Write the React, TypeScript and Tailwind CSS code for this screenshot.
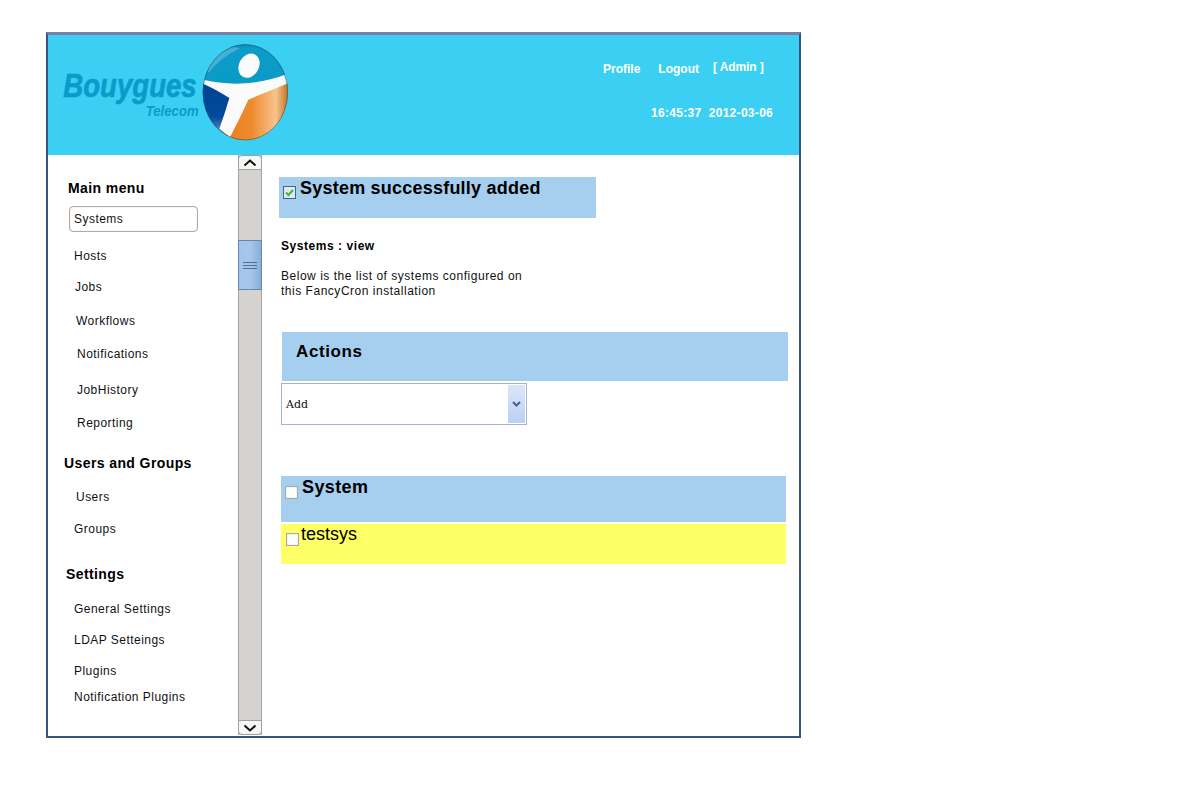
import React from "react";

const menu: { label: string; cls: string }[] = [
  { label: "Hosts", cls: "mt-[16px] ml-[26px]" },
  { label: "Jobs", cls: "mt-[15px] ml-[27px]" },
  { label: "Workflows", cls: "mt-[18px] ml-[28px]" },
  { label: "Notifications", cls: "mt-[17px] ml-[29px]" },
  { label: "JobHistory", cls: "mt-[20px] ml-[29px]" },
  { label: "Reporting", cls: "mt-[17px] ml-[29px]" },
];
const users: { label: string; cls: string }[] = [
  { label: "Users", cls: "mt-[18px] ml-[28px]" },
  { label: "Groups", cls: "mt-[16px] ml-[26px]" },
];
const settings: { label: string; cls: string }[] = [
  { label: "General Settings", cls: "mt-[19px] ml-[26px]" },
  { label: "LDAP Setteings", cls: "mt-[15px] ml-[26px]" },
  { label: "Plugins", cls: "mt-[15px] ml-[26px]" },
  { label: "Notification Plugins", cls: "mt-[10px] ml-[26px]" },
];

function Item({ label, cls }: { label: string; cls: string }) {
  return <div className={`h-4 leading-4 text-[12px] tracking-[0.47px] text-[#111] ${cls}`}>{label}</div>;
}

function Heading({ label, cls }: { label: string; cls: string }) {
  return <div className={`h-4 leading-4 text-[14px] font-bold tracking-[0.4px] text-black ${cls}`}>{label}</div>;
}

function Logo() {
  return (
    <svg width="230" height="100" viewBox="60 42 690 300" className="block">
      <defs>
        <clipPath id="ball">
          <ellipse cx="616" cy="193" rx="128" ry="144" />
        </clipPath>
        <linearGradient id="top" x1="0" y1="0" x2="0.2" y2="1">
          <stop offset="0" stopColor="#0d6f94" />
          <stop offset="0.25" stopColor="#0c9cc9" />
          <stop offset="1" stopColor="#0a9ac6" />
        </linearGradient>
        <linearGradient id="orange" x1="0" y1="0" x2="1" y2="0">
          <stop offset="0" stopColor="#ec7a1c" />
          <stop offset="0.45" stopColor="#ee8a2e" />
          <stop offset="0.8" stopColor="#f6c48c" />
          <stop offset="1" stopColor="#b9640f" />
        </linearGradient>
        <linearGradient id="blue" x1="0" y1="0" x2="0" y2="1">
          <stop offset="0" stopColor="#00428f" />
          <stop offset="0.6" stopColor="#004a9e" />
          <stop offset="1" stopColor="#8fb4dc" />
        </linearGradient>
      </defs>
      <text x="70" y="207" fontFamily="'Liberation Sans', sans-serif" fontWeight="700" fontStyle="italic" fontSize="100" fill="#0a9cc8" stroke="#0a9cc8" strokeWidth="2" textLength="400" lengthAdjust="spacingAndGlyphs">Bouygues</text>
      <text x="317" y="265" fontFamily="'Liberation Sans', sans-serif" fontWeight="700" fontStyle="italic" fontSize="46" fill="#0a9cc8" textLength="159" lengthAdjust="spacingAndGlyphs">Telecom</text>
      <g clipPath="url(#ball)">
        <rect x="480" y="40" width="270" height="140" fill="url(#top)" />
        <path d="M480 155 L580 215 V340 H480 Z" fill="url(#blue)" />
        <path d="M600 225 L750 150 V340 H540 Z" fill="url(#orange)" />
        <path d="M505 62 Q560 50 600 60 Q540 90 505 135 Q495 100 505 62 Z" fill="#ffffff" opacity="0.22" />
        <path d="M480 153 Q615 188 750 135 L750 163 L625 215 Q600 270 570 328 L538 302 Q555 255 568 210 Q530 185 480 163 Z" fill="#fbfbfb" />
        <ellipse cx="627" cy="113" rx="30" ry="38" transform="rotate(28 627 113)" fill="#fbfbfb" />
      </g>
      <ellipse cx="616" cy="193" rx="127" ry="143" fill="none" stroke="#23505c" strokeWidth="3" opacity="0.55" />
    </svg>
  );
}

function CheckBox({ checked, cls }: { checked?: boolean; cls: string }) {
  return (
    <div className={`w-[13px] h-[13px] shrink-0 ${checked ? "border border-[#44648c] bg-[#dfe9ee]" : "border border-[#a8a8a8] bg-[#fdfdfd] shadow-[inset_0_0_1px_#999]"} ${cls}`}>
      {checked && (
        <svg width="11" height="11" viewBox="0 0 11 11" className="block">
          <path d="M2 5.5 L4.5 8 L9 3" fill="none" stroke="#3fb53a" strokeWidth="2" />
        </svg>
      )}
    </div>
  );
}

export default function App() {
  return (
    <div className="w-[1200px] h-[800px] bg-white pt-[32px] pl-[46px] font-['Liberation_Sans',Arial,sans-serif] overflow-hidden">
      <div className="w-[755px] h-[706px] border-2 border-[#3a5188] border-t-[#7d7ea6] border-t-[3px] flex flex-col">
        <header className="h-[120px] shrink-0 bg-[#3bd0f3] flex justify-between">
          <div className="pt-[7px] pl-[12px]">
            <Logo />
          </div>
          <div className="w-[196px] pt-[26px] text-white font-bold text-[12px]">
            <div className="flex items-start h-4 leading-4">
              <span>Profile</span>
              <span className="ml-[18px]">Logout</span>
              <span className="ml-[14px] -mt-[2px] tracking-[-0.1px]">[ Admin ]</span>
            </div>
            <div className="mt-[28px] ml-[48px] h-4 leading-4 tracking-[0.3px] whitespace-pre">16:45:37  2012-03-06</div>
          </div>
        </header>
        <div className="flex-1 flex min-h-0">
          <nav className="w-[190px] shrink-0">
            <Heading label="Main menu" cls="mt-[25px] ml-[20px]" />
            <div className="mt-[10px] ml-[21px] w-[129px] h-[26px] rounded-[4px] border border-[#b0aaa0] shadow-[inset_0_0_1px_#b0aaa0] pl-[4px] text-[12px] tracking-[0.47px] leading-[24px] text-[#111]">Systems</div>
            {menu.map((m) => (
              <Item key={m.label} {...m} />
            ))}
            <Heading label="Users and Groups" cls="mt-[24px] ml-[16px]" />
            {users.map((m) => (
              <Item key={m.label} {...m} />
            ))}
            <Heading label="Settings" cls="mt-[29px] ml-[18px]" />
            {settings.map((m) => (
              <Item key={m.label} {...m} />
            ))}
          </nav>
          <div className="w-[24px] h-[580px] shrink-0 flex flex-col border-x border-[#a5a5a3] bg-[#d4d3d0]">
            <div className="h-[15px] shrink-0 -mx-px bg-[#f6f6f4] border border-[#a0a0a0] rounded-t-[4px] flex items-center justify-center">
              <svg width="14" height="8" viewBox="0 0 14 8"><path d="M1.5 6.5 L7 1.5 L12.5 6.5" fill="none" stroke="#111" strokeWidth="2" /></svg>
            </div>
            <div className="flex-1 pt-[70px]">
              <div className="h-[50px] bg-gradient-to-r from-[#a4c4ea] via-[#a8c6ea] to-[#8aafd9] border border-[#6486b4] -mx-px flex flex-col items-center justify-center gap-[2px]">
                <div className="w-[14px] h-px bg-[#4f6f9d]" />
                <div className="w-[14px] h-px bg-[#4f6f9d]" />
                <div className="w-[14px] h-px bg-[#4f6f9d]" />
              </div>
            </div>
            <div className="h-[15px] shrink-0 -mx-px bg-[#f6f6f4] border border-[#a0a0a0] rounded-b-[4px] flex items-center justify-center">
              <svg width="14" height="8" viewBox="0 0 14 8"><path d="M1.5 1.5 L7 6.5 L12.5 1.5" fill="none" stroke="#111" strokeWidth="2" /></svg>
            </div>
          </div>
          <main className="flex-1 min-w-0">
            <div className="mt-[22px] ml-[17px] w-[317px] h-[41px] bg-[#a6cfef] flex items-start">
              <CheckBox checked cls="mt-[9px] ml-[4px]" />
              <span className="ml-[4px] mt-[1px] text-[18px] leading-[21px] font-bold text-black tracking-[0.22px] whitespace-nowrap">System successfully added</span>
            </div>
            <div className="mt-[20px] ml-[19px] h-4 leading-4 text-[12px] font-bold tracking-[0.55px] text-black">Systems : view</div>
            <p className="mt-[15px] ml-[19px] w-[260px] text-[12px] leading-[15px] tracking-[0.52px] text-[#111]">
              Below is the list of systems configured on<br />this FancyCron installation
            </p>
            <div className="mt-[33px] ml-[20px] w-[506px] h-[49px] bg-[#a6cfef] pl-[14px] pt-[9px] text-[17px] leading-[22px] font-bold text-black tracking-[0.6px]">Actions</div>
            <div className="mt-[2px] ml-[19px] w-[246px] h-[42px] border border-[#a3b5cc] flex items-center justify-between pl-[4px] pr-px bg-white">
              <span className="mt-[3px] font-['DejaVu_Serif',serif] text-[11px] text-[#111]">Add</span>
              <div className="w-[17px] h-[38px] bg-gradient-to-b from-[#dbe6f8] to-[#bcd0f5] flex items-center justify-center">
                <svg width="9" height="6" viewBox="0 0 9 6"><path d="M1 1 L4.5 4.5 L8 1" fill="none" stroke="#4d6185" strokeWidth="2" /></svg>
              </div>
            </div>
            <div className="mt-[51px] ml-[19px] w-[505px] h-[46px] bg-[#a6cfef] flex items-start">
              <CheckBox cls="mt-[10px] ml-[4px]" />
              <span className="ml-[4px] mt-[1px] text-[18px] leading-[21px] font-bold text-black tracking-[0.4px]">System</span>
            </div>
            <div className="mt-[2px] ml-[19px] w-[505px] h-[40px] bg-[#ffff66] flex items-start">
              <CheckBox cls="mt-[9px] ml-[5px]" />
              <span className="ml-[2px] text-[18px] leading-[21px] text-black">testsys</span>
            </div>
          </main>
        </div>
      </div>
    </div>
  );
}
